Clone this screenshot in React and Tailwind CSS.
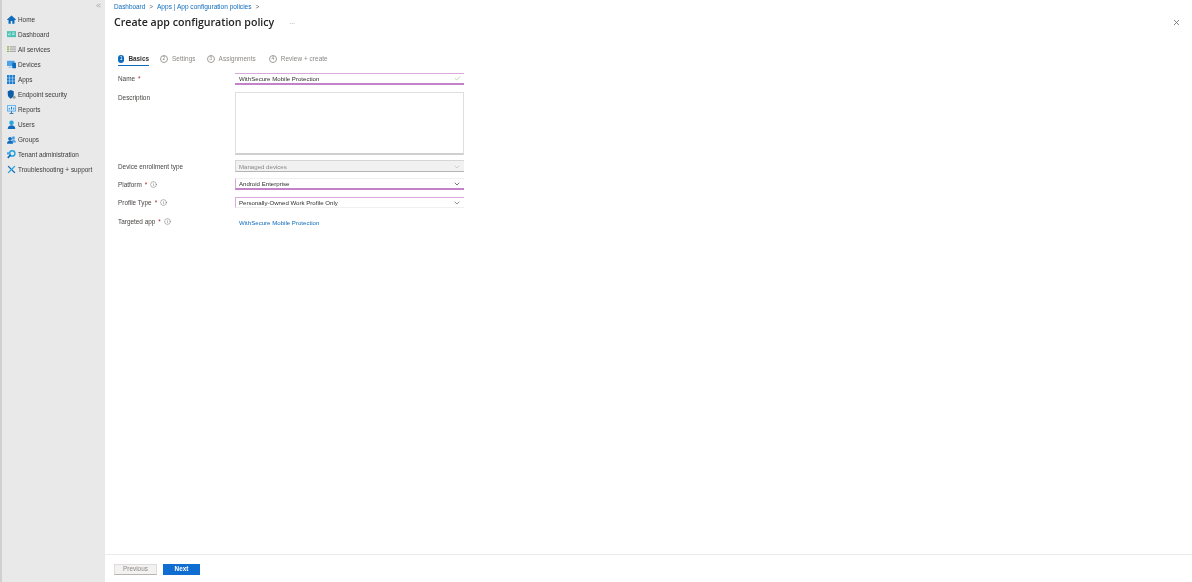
import React from 'react';
import { X, ChevronDown, Check, ChevronsLeft, Info } from 'lucide-react';

function Home() {
  return <svg viewBox="0 0 12 12" className="w-[9px] h-[9px]"><path d="M6 .5 0 6l1 1 1-.8V11.500h3V8h2v3.500h3V6.200l1 .8 1-1z" fill="#0f6cbd" /></svg>;
}
function Dash() {
  return <svg viewBox="0 0 12 12" className="w-[9px] h-[9px]"><rect y="1.500" width="12" height="8" fill="#4fc3b5" /><path d="M2 7V5M4 7V3.500M7 4h3M7 6h3" stroke="#e8f8f5" strokeWidth="1" /></svg>;
}
function AllServices() {
  return <svg viewBox="0 0 12 12" className="w-[9px] h-[9px]"><path d="M0 2.500h3M0 5.500h3M0 8.500h3" stroke="#8ab04a" strokeWidth="1.500" /><path d="M4 2.500h8M4 5.500h8M4 8.500h8" stroke="#a9a9a9" strokeWidth="1.500" /></svg>;
}
function Devices() {
  return <svg viewBox="0 0 12 12" className="w-[9px] h-[9px]"><rect y="1" width="10" height="7" rx=".5" fill="#4da3e8" /><rect x="7" y="3.500" width="5" height="7.500" rx=".5" fill="#0f6cbd" /><rect x="2" y="9" width="4" height="1.200" fill="#7ab8ec" /></svg>;
}
function Apps() {
  return <svg viewBox="0 0 12 12" className="w-[8px] h-[9px]" preserveAspectRatio="none"><path d="M0 0h3.500v3.500H0zM4.200 0h3.500v3.500H4.200zM8.400 0H12v3.500H8.400zM0 4.200h3.500v3.500H0zM4.200 4.200h3.500v3.500H4.200zM8.400 4.200H12v3.500H8.400zM0 8.400h3.500V12H0zM4.200 8.400h3.500V12H4.200zM8.400 8.400H12V12H8.400z" fill="#1a7fd4" /></svg>;
}
function Shield() {
  return <svg viewBox="0 0 12 12" className="w-[9px] h-[9px]"><path d="M1 1.500 5 0l4 1.500V6c0 3-2.500 4.500-4 5.500C3.500 10.500 1 9 1 6z" fill="#0f5ea8" /><circle cx="9.500" cy="9.500" r="2" fill="#9a9a9a" /></svg>;
}
function ReportsIcon() {
  return <svg viewBox="0 0 12 12" className="w-[9px] h-[9px]"><rect width="12" height="8.500" rx=".5" fill="#4da3e8" /><rect x="1" y="1" width="10" height="6.500" fill="#d8ecfa" /><path d="M3 6V4M6 6V2.500M9 6V3.500" stroke="#0f6cbd" strokeWidth="1.200" /><path d="M6 8.500v2M3.500 11.500h5" stroke="#0f5ea8" strokeWidth="1.200" /></svg>;
}
function UsersIcon() {
  return <svg viewBox="0 0 12 12" className="w-[9px] h-[9px]"><circle cx="6" cy="3.500" r="3" fill="#22a5e0" /><path d="M1 12c0-3.500 2-5 5-5s5 1.500 5 5z" fill="#0f6cbd" /></svg>;
}
function GroupsIcon() {
  return <svg viewBox="0 0 12 12" className="w-[9px] h-[9px]"><circle cx="8.500" cy="4" r="2.200" fill="#4da3e8" /><path d="M5.500 10c0-2.500 1.200-3.500 3-3.500s3.500 1 3.500 3.500z" fill="#4da3e8" /><circle cx="4" cy="5" r="2.500" fill="#0f6cbd" /><path d="M0 11.500C0 8.800 1.600 7.800 4 7.800s4 1 4 3.700z" fill="#0f6cbd" /></svg>;
}
function TenantIcon() {
  return <svg viewBox="0 0 12 12" className="w-[9px] h-[9px]"><circle cx="7" cy="4.500" r="3.500" fill="none" stroke="#22a5e0" strokeWidth="2" /><path d="M5 6.500 1 10.500" stroke="#0f6cbd" strokeWidth="2.200" /><rect x="0" y="3" width="3" height="3" fill="#4da3e8" /></svg>;
}
function TroubleIcon() {
  return <svg viewBox="0 0 12 12" className="w-[9px] h-[9px]"><path d="M1.500 1.500 10.500 10.500" stroke="#0f6cbd" strokeWidth="1.800" /><path d="M10.500 1.500 1.500 10.500" stroke="#22a5e0" strokeWidth="1.800" /></svg>;
}

const navItems = [
  { label: 'Home', icon: <Home /> },
  { label: 'Dashboard', icon: <Dash /> },
  { label: 'All services', icon: <AllServices /> },
  { label: 'Devices', icon: <Devices /> },
  { label: 'Apps', icon: <Apps /> },
  { label: 'Endpoint security', icon: <Shield /> },
  { label: 'Reports', icon: <ReportsIcon /> },
  { label: 'Users', icon: <UsersIcon /> },
  { label: 'Groups', icon: <GroupsIcon /> },
  { label: 'Tenant administration', icon: <TenantIcon /> },
  { label: 'Troubleshooting + support', icon: <TroubleIcon /> },
];

const steps = [
  { n: '2', label: 'Settings' },
  { n: '3', label: 'Assignments' },
  { n: '4', label: 'Review + create' },
];

function Label({ text, required, info, className = '' }) {
  return (
    <div className={`w-[117px] shrink-0 flex items-center gap-[3px] text-[#484644] ${className}`}>
      <span>{text}</span>
      {required && <span className="text-[#a4262c]">*</span>}
      {info && <Info className="w-[7px] h-[7px] text-[#605e5c]" strokeWidth={1.500} />}
    </div>
  );
}

export default function App() {
  return (
    <div className="flex h-[582px] w-[1192px] overflow-hidden bg-white text-[6.400px] font-['Liberation_Sans',sans-serif] text-[#323130] blur-[0.35px]">
      <aside className="w-[105px] shrink-0 bg-[#e9e9e9] border-l-2 border-[#d0d0d0] pt-[2px]">
        <div className="h-[9px] flex justify-end pr-[3px] text-[#8a8886]">
          <ChevronsLeft className="w-[7px] h-[7px]" />
        </div>
        <nav className="mt-[1px] flex flex-col">
          {navItems.map((item) => (
            <div key={item.label} className="h-[15px] flex items-center pl-[5px]">
              <span className="w-[11px] flex justify-start">{item.icon}</span>
              <span className="text-[#3b3a39] whitespace-nowrap">{item.label}</span>
            </div>
          ))}
        </nav>
      </aside>

      <main className="flex-1 flex flex-col min-w-0">
        <div className="flex-1 pl-[9px] pr-[11px] pt-[2px]">
          <div className="h-[10px] flex items-center gap-[4px] text-[#0f6cbd]">
            <span>Dashboard</span>
            <span className="text-[#605e5c]">&gt;</span>
            <span className="text-[6.550px]">Apps | App configuration policies</span>
            <span className="text-[#605e5c]">&gt;</span>
          </div>
          <div className="h-[20px] flex items-center justify-between">
            <div className="flex items-center gap-[15px]">
              <h1 className="pt-[2px] text-[10.600px] font-semibold font-['Open_Sans',sans-serif] text-[#252423]">Create app configuration policy</h1>
              <span className="text-[7px] text-[#a19f9d] leading-none">...</span>
            </div>
            <X className="w-[9px] h-[9px] text-[#605e5c]" strokeWidth={2} />
          </div>

          <div className="mt-[22px] flex gap-[11px] h-[12px] items-start pl-[4px]">
            <div className="h-[12px] flex items-start gap-[4px] border-b border-[#0f6cbd] w-[31px]">
              <span className="w-[8px] h-[8px] mt-[1px] rounded-full bg-[#0f6cbd] text-white text-[5px] flex items-center justify-center">1</span>
              <span className="font-semibold leading-[10px] text-[#323130]">Basics</span>
            </div>
            {steps.map((s) => (
              <div key={s.n} className="flex items-start gap-[4px] text-[#8a8886] tracking-[0.06px] last:ml-[2px]">
                <span className="w-[8px] h-[8px] mt-[1px] rounded-full border border-[#a19f9d] text-[5px] flex items-center justify-center">{s.n}</span>
                <span className="leading-[10px]">{s.label}</span>
              </div>
            ))}
          </div>

          <div className="mt-[7px] pl-[4px] w-[350px] flex flex-col">
            <div className="flex h-[12px] items-center">
              <Label text="Name" required />
              <div className="flex-1 h-[12px] flex items-center justify-between pl-[4px] pr-[3px] border-t border-t-[#d9a9dc] border-b-2 border-b-[#c283c9] bg-white text-[6.100px]">
                <span>WithSecure Mobile Protection</span>
                <Check className="w-[7px] h-[7px] text-[#8cbf6b]" strokeWidth={2} />
              </div>
            </div>

            <div className="flex mt-[7px] h-[63px]">
              <Label text="Description" className="self-start pt-[1px]" />
              <div className="flex-1 border border-[#e1dfdd] border-b-2 border-b-[#d2d0ce]" />
            </div>

            <div className="flex mt-[5px] h-[12px] items-center">
              <Label text="Device enrollment type" className="pt-[2px]" />
              <div className="flex-1 h-[12px] pt-[1px] flex items-center justify-between px-[3px] bg-[#f1f1f1] border-t border-t-[#d6d6d6] border-b border-b-[#b5b5b5] border-l border-l-[#d6d6d6] text-[#8a8886] text-[6.100px]">
                <span>Managed devices</span>
                <ChevronDown className="w-[8px] h-[8px] text-[#bdbdbd]" />
              </div>
            </div>

            <div className="flex mt-[6px] h-[12px] items-center">
              <Label text="Platform" required info className="pt-[2px]" />
              <div className="flex-1 h-[12px] pt-[1px] flex items-center justify-between px-[3px] border-t border-t-[#f0f0f0] border-b-2 border-b-[#c283c9] border-l border-l-[#d9a9dc] text-[6.100px]">
                <span>Android Enterprise</span>
                <ChevronDown className="w-[8px] h-[8px] text-[#323130]" />
              </div>
            </div>

            <div className="flex mt-[7px] h-[11px] items-center">
              <Label text="Profile Type" required info />
              <div className="flex-1 h-[11px] flex items-center justify-between px-[3px] border-t border-t-[#d9a9dc] border-b border-b-[#f0f0f0] border-l border-l-[#d9a9dc] text-[6.100px]">
                <span>Personally-Owned Work Profile Only</span>
                <ChevronDown className="w-[8px] h-[8px] text-[#605e5c]" />
              </div>
            </div>

            <div className="flex mt-[9px] h-[11px] items-center">
              <Label text="Targeted app" required info className="self-start" />
              <span className="pl-[4px] text-[#0f6cbd] text-[6.100px]">WithSecure Mobile Protection</span>
            </div>
          </div>
        </div>

        <footer className="h-[28px] shrink-0 border-t border-[#edebe9] pl-[9px] pt-[9px] flex items-start gap-[6px]">
          <button className="w-[43px] h-[11px] bg-[#f3f2f1] border border-[#dcdcdc] border-b-[#b5b5b5] text-[#8a8886] text-[6.400px] leading-none">Previous</button>
          <button className="w-[37px] h-[11px] bg-[#0f6cd0] text-white font-semibold text-[6.400px] leading-none">Next</button>
        </footer>
      </main>
    </div>
  );
}
